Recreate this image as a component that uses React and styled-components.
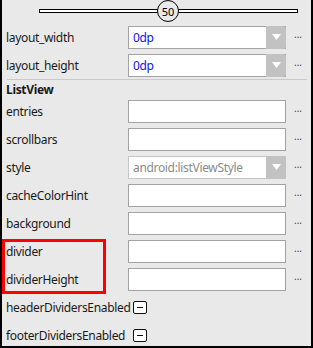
import React from "react";
import styled, { createGlobalStyle } from "styled-components";

const GlobalStyle = createGlobalStyle`
    html, body {
        margin: 0;
        padding: 0;
        background: #fff;
    }
    * {
        box-sizing: border-box;
    }
`;

const Panel = styled.div`
    width: 313px;
    height: 348px;
    background: #e9e9e9;
    border-left: 2px solid #000;
    border-right: 2px solid #000;
    border-bottom: 2px solid #000;
    font-family: "Noto Sans", "Open Sans", sans-serif;
    font-size: 12px;
    letter-spacing: -0.33px;
    color: #1a1a1a;
    overflow: hidden;
`;

const SliderArea = styled.div`
    height: 23px;
    padding: 9px 13px 0 37px;
    position: relative;
`;

const Track = styled.div`
    height: 4px;
    border: 1px solid #000;
    background: #fff;
`;

const Knob = styled.div`
    position: absolute;
    left: 155px;
    top: 0;
    width: 22px;
    height: 22px;
    border-radius: 50%;
    border: 1px solid #000;
    background: #e9e9e9;
    display: flex;
    align-items: center;
    justify-content: center;
    font-size: 11px;
    letter-spacing: 0;
    color: #000;
`;

const Row = styled.div`
    height: 28px;
    display: grid;
    grid-template-columns: 122px 158px 1fr;
    align-items: center;
    padding-left: 4px;
`;

const Label = styled.div`
    white-space: nowrap;
`;

const Box = styled.div`
    height: 23px;
    background: #fff;
    border: 1px solid ${(p) => (p.$disabled ? "#c6c6c6" : "#a3a3a3")};
    display: flex;
    align-items: center;
    padding-left: 4px;
    color: ${(p) => (p.$disabled ? "#8a8a8a" : "#1010f0")};
    position: relative;
`;

const DropButton = styled.div`
    position: absolute;
    right: -1px;
    top: -1px;
    bottom: -1px;
    width: 20px;
    background: #c2c2c2;
    border-radius: 0 3px 3px 0;
    display: flex;
    align-items: center;
    justify-content: center;
`;

const Dots = styled.div`
    padding-left: 8px;
    font-size: 10px;
    color: #444;
    letter-spacing: 0;
    line-height: 1;
    padding-bottom: 6px;
`;

const Separator = styled.div`
    height: 1px;
    margin: 0 4px 0 5px;
    background: #c9c9c9;
`;

const Section = styled.div`
    height: 17px;
    padding: 1px 0 0 4px;
    font-weight: bold;
    display: flex;
    align-items: center;
`;

const Highlight = styled.div`
    position: relative;
`;

const RedFrame = styled.div`
    position: absolute;
    left: 0;
    top: 2px;
    width: 104px;
    height: 55px;
    border: 3px solid #ff0000;
    pointer-events: none;
`;

const CheckRow = styled.div`
    height: 28px;
    display: flex;
    align-items: center;
    padding-left: 4px;
`;

const CheckLabel = styled.div`
    width: 127px;
    white-space: nowrap;
`;

const Check = styled.div`
    width: 14px;
    height: 13px;
    border: 1px solid #111;
    border-radius: 2px;
    background: #fff;
    display: flex;
    align-items: center;
    justify-content: center;
    &::after {
        content: "";
        width: 6px;
        height: 1px;
        background: #111;
    }
`;

function Arrow() {
    return (
        <svg width="9" height="6" viewBox="0 0 9 6">
            <path d="M0 0 L9 0 L4.5 6 Z" fill="#fff" />
        </svg>
    );
}

function Field({ label, value, dropdown, disabled }) {
    return (
        <Row>
            <Label>{label}</Label>
            <Box $disabled={disabled}>
                {value}
                {dropdown && (
                    <DropButton>
                        <Arrow />
                    </DropButton>
                )}
            </Box>
            <Dots>...</Dots>
        </Row>
    );
}

export default function App() {
    return (
        <>
            <GlobalStyle />
            <Panel>
                <SliderArea>
                    <Track />
                    <Knob>50</Knob>
                </SliderArea>
                <Field label="layout_width" value="0dp" dropdown />
                <Field label="layout_height" value="0dp" dropdown />
                <Separator />
                <Section>ListView</Section>
                <Field label="entries" />
                <Field label="scrollbars" />
                <Field label="style" value="android:listViewStyle" dropdown disabled />
                <Field label="cacheColorHint" />
                <Field label="background" />
                <Highlight>
                    <Field label="divider" />
                    <Field label="dividerHeight" />
                    <RedFrame />
                </Highlight>
                <CheckRow>
                    <CheckLabel>headerDividersEnabled</CheckLabel>
                    <Check />
                </CheckRow>
                <CheckRow>
                    <CheckLabel>footerDividersEnabled</CheckLabel>
                    <Check />
                </CheckRow>
            </Panel>
        </>
    );
}
